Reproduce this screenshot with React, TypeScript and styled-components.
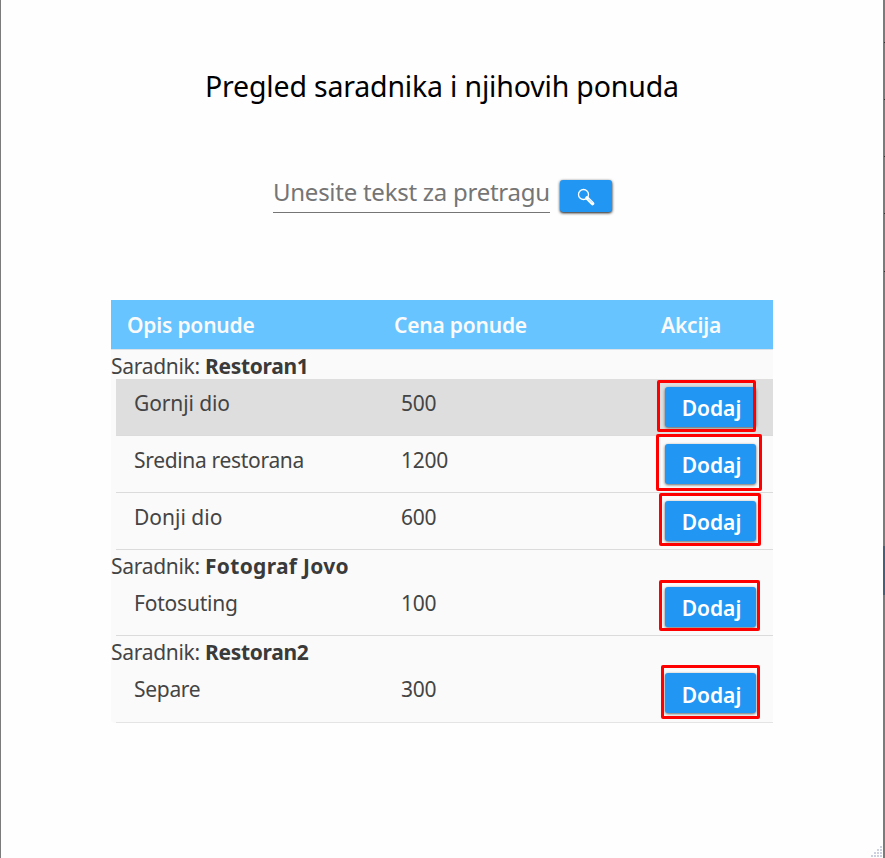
import React from 'react';
import styled, { createGlobalStyle } from 'styled-components';

const GlobalStyle = createGlobalStyle`
  * { box-sizing: border-box; }
  body { margin: 0; background: #fff; }
`;

const Window = styled.main`
  position: relative;
  width: 885px;
  height: 858px;
  overflow: hidden;
  background: #fefefe;
  border-left: 1px solid #7b7b7b;
  font-family: 'Noto Sans', sans-serif;
  color: #444;
`;

const Edge = styled.div`
  position: absolute;
  top: 0;
  right: 0;
  width: 2px;
  height: 100%;
  background: #7b7b7b;
`;

const EdgeMark = styled.span<{ $top: number; $height: number; $color: string }>`
  position: absolute;
  right: 0;
  top: ${(p) => p.$top}px;
  width: ${(p) => (p.$height > 1 ? 2 : 1)}px;
  height: ${(p) => p.$height}px;
  background: ${(p) => p.$color};
`;

const Title = styled.h1`
  margin: 65px 0 0 204px;
  height: 42px;
  font-size: 28.5px;
  line-height: 42px;
  font-weight: 400;
  letter-spacing: -0.18px;
  color: #000;
  white-space: nowrap;
`;

const Search = styled.form`
  display: flex;
  margin: 66px 0 0 272px;
  height: 40px;
  gap: 10px;
`;

const SearchInput = styled.input`
  width: 277px;
  height: 40px;
  padding: 0 0 2px;
  border: 0;
  border-bottom: 1px solid #757575;
  background: transparent;
  font: 400 24px 'Noto Sans', sans-serif;
  letter-spacing: -0.26px;
  outline: 0;
  &::placeholder { color: #757575; opacity: 1; }
`;

const SearchButton = styled.button`
  display: flex;
  align-items: center;
  justify-content: center;
  width: 52px;
  height: 32px;
  margin-top: 7px;
  padding: 1px 0 0;
  border: 0;
  border-radius: 3px;
  background: #2196f3;
  box-shadow: 0 1px 3px rgba(0, 0, 0, 0.95);
`;

const Table = styled.section`
  width: 662px;
  margin: 87px 0 0 110px;
  background: #fafafa;
  border-radius: 0 0 4px 4px;
`;

const Header = styled.header`
  display: grid;
  grid-template-columns: 267px 267px 1fr;
  height: 50px;
  padding-left: 16px;
  border-bottom: 1px solid #dbe3e8;
  background: #67c4ff;
  color: #fafafa;
  font-size: 21px;
  line-height: 51px;
  font-weight: 600;
  letter-spacing: -0.2px;
`;

const Partner = styled.h2`
  height: 29px;
  margin: 0;
  font-size: 21px;
  line-height: 33px;
  font-weight: 400;
  letter-spacing: -0.3px;
  white-space: nowrap;
`;

const PartnerName = styled.strong<{ $tracking: number }>`
  font-weight: 700;
  color: #3a3a3a;
  letter-spacing: ${(p) => p.$tracking}px;
`;

const Row = styled.div<{ $active?: boolean }>`
  display: grid;
  grid-template-columns: 267px 264px 1fr;
  height: 57px;
  margin-left: 5px;
  padding-left: 18px;
  border-bottom: 1px solid #dbdbdb;
  background: ${(p) => (p.$active ? '#dedede' : 'transparent')};
  font-size: 21px;
  line-height: 49px;
  &:last-child { height: 58px; border-bottom-color: #e4e4e4; }
`;

const OfferName = styled.span<{ $tracking: number }>`
  letter-spacing: ${(p) => p.$tracking}px;
`;

const Price = styled.span`
  letter-spacing: -0.25px;
`;

const ActionCell = styled.div`
  position: relative;
  padding-top: 8px;
`;

const AddButton = styled.button`
  display: block;
  width: 91px;
  height: 40px;
  padding: 3px 0 0 2px;
  border: 0;
  border-radius: 3px;
  background: #2196f3;
  box-shadow: 0 1px 3px rgba(0, 0, 0, 0.6);
  color: #fff;
  font: 600 21px/37px 'Noto Sans', sans-serif;
  ${Row}:last-child & { padding-top: 4px; line-height: 36px; padding-bottom: 0; }
`;

type Box = [left: number, top: number, width: number, height: number];

const Highlight = styled.span<{ $box: Box }>`
  position: absolute;
  left: ${(p) => p.$box[0]}px;
  top: ${(p) => p.$box[1]}px;
  width: ${(p) => p.$box[2]}px;
  height: ${(p) => p.$box[3]}px;
  border: 3px solid #fe0000;
  border-radius: 2px;
  z-index: 1;
`;

const Grip = styled.svg`
  position: absolute;
  right: 3px;
  bottom: 1px;
`;

interface Offer { name: string; price: number; box: Box; tracking: number; active?: boolean }

const partners: { name: string; tracking: number; offers: Offer[] }[] = [
  {
    name: 'Restoran1',
    tracking: -0.3,
    offers: [
      { name: 'Gornji dio', price: 500, tracking: -0.1, box: [-8, 1, 99, 52], active: true },
      { name: 'Sredina restorana', price: 1200, tracking: -0.32, box: [-9, -2, 106, 57] },
      { name: 'Donji dio', price: 600, tracking: 0, box: [-6, 0, 102, 53] },
    ],
  },
  {
    name: 'Fotograf Jovo',
    tracking: 0.3,
    offers: [{ name: 'Fotosuting', price: 100, tracking: -0.2, box: [-6, 1, 101, 51] }],
  },
  {
    name: 'Restoran2',
    tracking: -0.3,
    offers: [{ name: 'Separe', price: 300, tracking: -0.3, box: [-4, 0, 99, 54] }],
  },
];

const gripDots = [[9, 0], [6, 3], [9, 3], [3, 6], [6, 6], [9, 6], [0, 9], [3, 9], [6, 9], [9, 9]];
const edgeTicks = [42, 99, 156, 213, 271];

export default function App() {
  return (
    <>
      <GlobalStyle />
      <Window>
        <Title>Pregled saradnika i njihovih ponuda</Title>
        <Search onSubmit={(e) => e.preventDefault()}>
          <SearchInput placeholder="Unesite tekst za pretragu" />
          <SearchButton aria-label="Pretraga">
            <svg width="18" height="18" viewBox="0 0 18 18" fill="none" stroke="#fff">
              <circle cx="6.5" cy="6.5" r="5" strokeWidth="1.3" />
              <path d="M10 10L15.5 15.5" strokeWidth="3.6" strokeLinecap="round" />
              <path d="M11.5 11L15.3 14.8" stroke="#8cc8f8" strokeWidth=".7" />
            </svg>
          </SearchButton>
        </Search>
        <Table>
          <Header>
            <span>Opis ponude</span>
            <span>Cena ponude</span>
            <span>Akcija</span>
          </Header>
          {partners.map((partner) => (
            <React.Fragment key={partner.name}>
              <Partner>
                Saradnik: <PartnerName $tracking={partner.tracking}>{partner.name}</PartnerName>
              </Partner>
              {partner.offers.map((offer) => (
                <Row key={offer.name} $active={offer.active}>
                  <OfferName $tracking={offer.tracking}>{offer.name}</OfferName>
                  <Price>{offer.price}</Price>
                  <ActionCell>
                    <AddButton>Dodaj</AddButton>
                    <Highlight $box={offer.box} />
                  </ActionCell>
                </Row>
              ))}
            </React.Fragment>
          ))}
        </Table>
        <Grip width="11" height="11" viewBox="0 0 11 11">
          {gripDots.map(([x, y]) => (
            <rect key={`${x}-${y}`} x={x} y={y} width="2" height="2" fill="#ccd0df" />
          ))}
        </Grip>
        <Edge />
        {edgeTicks.map((top) => (
          <EdgeMark key={top} $top={top} $height={1} $color="#333" />
        ))}
        <EdgeMark $top={546} $height={49} $color="#46607a" />
      </Window>
    </>
  );
}
